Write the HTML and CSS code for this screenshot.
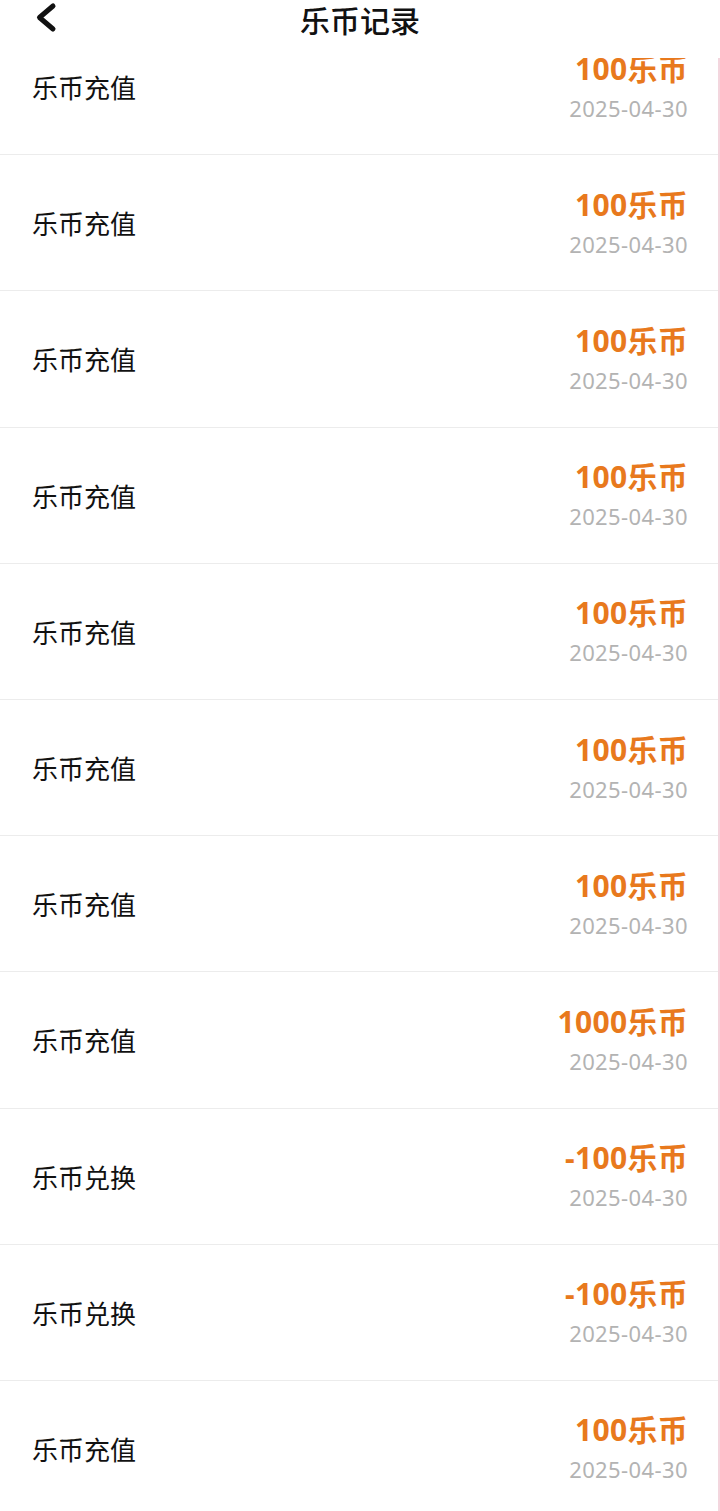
FILE: index.html
```html
<!DOCTYPE html>
<html lang="zh-CN">
<head>
	<meta charset="UTF-8">
	<meta name="viewport" content="width=device-width, initial-scale=1.0">
	<title>乐币记录</title>
	<link rel="stylesheet" href="styles.css">
</head>
<body>
	<div class="page">
		<!-- 顶部导航 -->
		<header class="top_bar">
			<div class="bar_row">
				<a class="back_btn" href="#">
					<svg width="30" height="38" viewBox="0 0 30 38">
						<path d="M23 6 L9.5 17.5 L23 29" fill="none" stroke="#111" stroke-width="5" stroke-linecap="round" stroke-linejoin="round"/>
					</svg>
				</a>
				<h1 class="title">乐币记录</h1>
				<span></span>
			</div>
		</header>

		<!-- 记录列表 -->
		<div class="scroll_box">
			<ul class="record_list">
				<li class="record">
					<span class="record_name">乐币充值</span>
					<div class="record_right">
						<span class="amount">100乐币</span>
						<span class="date">2025-04-30</span>
					</div>
				</li>
				<li class="record">
					<span class="record_name">乐币充值</span>
					<div class="record_right">
						<span class="amount">100乐币</span>
						<span class="date">2025-04-30</span>
					</div>
				</li>
				<li class="record">
					<span class="record_name">乐币充值</span>
					<div class="record_right">
						<span class="amount">100乐币</span>
						<span class="date">2025-04-30</span>
					</div>
				</li>
				<li class="record">
					<span class="record_name">乐币充值</span>
					<div class="record_right">
						<span class="amount">100乐币</span>
						<span class="date">2025-04-30</span>
					</div>
				</li>
				<li class="record">
					<span class="record_name">乐币充值</span>
					<div class="record_right">
						<span class="amount">100乐币</span>
						<span class="date">2025-04-30</span>
					</div>
				</li>
				<li class="record">
					<span class="record_name">乐币充值</span>
					<div class="record_right">
						<span class="amount">100乐币</span>
						<span class="date">2025-04-30</span>
					</div>
				</li>
				<li class="record">
					<span class="record_name">乐币充值</span>
					<div class="record_right">
						<span class="amount">100乐币</span>
						<span class="date">2025-04-30</span>
					</div>
				</li>
				<li class="record">
					<span class="record_name">乐币充值</span>
					<div class="record_right">
						<span class="amount">1000乐币</span>
						<span class="date">2025-04-30</span>
					</div>
				</li>
				<li class="record">
					<span class="record_name">乐币兑换</span>
					<div class="record_right">
						<span class="amount">-100乐币</span>
						<span class="date">2025-04-30</span>
					</div>
				</li>
				<li class="record">
					<span class="record_name">乐币兑换</span>
					<div class="record_right">
						<span class="amount">-100乐币</span>
						<span class="date">2025-04-30</span>
					</div>
				</li>
				<li class="record">
					<span class="record_name">乐币充值</span>
					<div class="record_right">
						<span class="amount">100乐币</span>
						<span class="date">2025-04-30</span>
					</div>
				</li>
			</ul>
		</div>
	</div>
</body>
</html>
```

FILE: styles.css
```css
* {
	box-sizing: border-box;
}
body {
	margin: 0;
	background: #fff;
	font-family: "Noto Sans", "Noto Sans CJK SC", sans-serif;
	color: #111;
}
.page {
	height: 100vh;
	display: flex;
	flex-direction: column;
	overflow: hidden;
}
.top_bar {
	height: 58px;
	flex-shrink: 0;
	background: #fff;
}
.bar_row {
	height: 38px;
	display: grid;
	grid-template-columns: 1fr auto 1fr;
	align-items: center;
}
.back_btn {
	display: flex;
	padding-left: 30px;
}
.title {
	margin: 0;
	font-size: 30px;
	font-weight: 500;
	line-height: 38px;
	font-family: "Noto Sans CJK SC", sans-serif;
}
.scroll_box {
	flex: 1;
	overflow: hidden;
	border-right: 2px solid #f3d6de;
}
.record_list {
	list-style: none;
	margin: -39px 0 0;
	padding: 0;
}
.record {
	height: 136.2px;
	display: flex;
	justify-content: space-between;
	align-items: center;
	padding: 0 30px 0 32px;
	border-bottom: 1px solid #ececec;
}
.record_name {
	font-size: 26px;
	font-family: "Noto Sans CJK SC", sans-serif;
	color: #111;
}
.record_right {
	display: flex;
	flex-direction: column;
	align-items: flex-end;
	gap: 8px;
}
.amount {
	font-size: 30px;
	line-height: 34px;
	font-weight: 700;
	letter-spacing: 0.3px;
	color: #e8791d;
}
.date {
	font-size: 22px;
	line-height: 28px;
	letter-spacing: 0.4px;
	color: #b3b3b3;
}
```
